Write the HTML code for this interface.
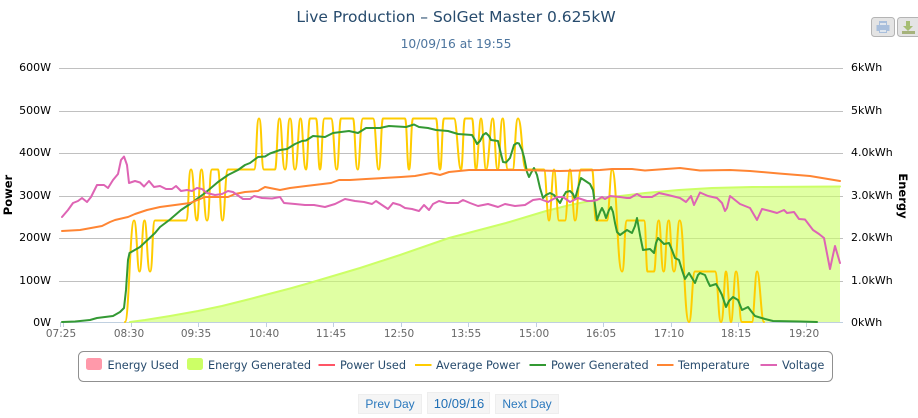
<!DOCTYPE html>
<html>
<head>
<meta charset="utf-8">
<style>
html,body{margin:0;padding:0;background:#fff;width:918px;height:418px;overflow:hidden}
svg{display:block}
text{font-family:"DejaVu Sans",sans-serif}
.l{font-size:11px;fill:#000}
.x{font-size:10.500px;fill:#666;text-anchor:middle}
.g{font-size:11.300px;fill:#274b6d}
.n{font-family:"Liberation Sans",sans-serif;font-size:12px;fill:#2a78bd;text-anchor:middle}
.grid line{stroke:#c0c0c0;stroke-width:1}
.s{fill:none;stroke-width:2;stroke-linejoin:round;stroke-linecap:round}
</style>
</head>
<body>
<svg width="918" height="418" viewBox="0 0 918 418" xmlns="http://www.w3.org/2000/svg">
<text x="456" y="22" text-anchor="middle" font-size="15.500" fill="#274b6d">Live Production – SolGet Master 0.625kW</text>
<text x="456" y="48" text-anchor="middle" font-size="12.300" fill="#4d759e">10/09/16 at 19:55</text>

<!-- export buttons -->
<rect x="871.500" y="17.500" width="23" height="19" rx="3" fill="#e4e4e4" stroke="#b4b4b4"/>
<rect x="897.500" y="17.500" width="23" height="19" rx="3" fill="#e4e4e4" stroke="#b4b4b4"/>
<path d="M879 21h8v4h2.500v6h-2.500v2h-8v-2h-2.500v-6h2.500z" fill="#a9bfdc"/>
<path d="M880 23h6v2h-6zM880 30h6v2h-6z" fill="#dfe6ee"/>
<path d="M906 21h4v5h3l-5 5-5-5h3z" fill="#a6bd72"/>
<rect x="902" y="31" width="13" height="3" fill="#a6b37c"/>

<!-- grid -->
<g class="grid">
<line x1="59" x2="843" y1="68.500" y2="68.500"/>
<line x1="59" x2="843" y1="111.500" y2="111.500"/>
<line x1="59" x2="843" y1="153.500" y2="153.500"/>
<line x1="59" x2="843" y1="196.500" y2="196.500"/>
<line x1="59" x2="843" y1="238.500" y2="238.500"/>
<line x1="59" x2="843" y1="281.500" y2="281.500"/>
</g>
<path d="M60 322.500H843" stroke="#c0d0e0" fill="none"/>
<path d="M60.500 322v5M63.500 322v5M131.500 322v5M198.500 322v5M266.500 322v5M333.500 322v5M401.500 322v5M468.500 322v5M536.500 322v5M603.500 322v5M671.500 322v5M738.500 322v5M806.500 322v5" stroke="#c0d0e0" fill="none"/>

<!-- y labels -->
<g class="l" text-anchor="end">
<text x="51" y="71">600W</text>
<text x="51" y="114">500W</text>
<text x="51" y="156">400W</text>
<text x="51" y="199">300W</text>
<text x="51" y="241">200W</text>
<text x="51" y="284">100W</text>
<text x="51" y="326">0W</text>
</g>
<g class="l">
<text x="851" y="71">6kWh</text>
<text x="851" y="114">5kWh</text>
<text x="851" y="156">4.0kWh</text>
<text x="851" y="199">3.0kWh</text>
<text x="851" y="241">2.0kWh</text>
<text x="851" y="284">1.0kWh</text>
<text x="851" y="326">0kWh</text>
</g>
<text transform="translate(12 195) rotate(-90)" text-anchor="middle" font-size="11.500" font-weight="bold" fill="#000">Power</text>
<text transform="translate(899 196) rotate(90)" text-anchor="middle" font-size="11.500" font-weight="bold" fill="#000">Energy</text>

<!-- x labels -->
<text class="x" x="61" y="337">07:25</text>
<text class="x" x="129" y="337">08:30</text>
<text class="x" x="196" y="337">09:35</text>
<text class="x" x="264" y="337">10:40</text>
<text class="x" x="331" y="337">11:45</text>
<text class="x" x="399" y="337">12:50</text>
<text class="x" x="466" y="337">13:55</text>
<text class="x" x="534" y="337">15:00</text>
<text class="x" x="601" y="337">16:05</text>
<text class="x" x="669" y="337">17:10</text>
<text class="x" x="736" y="337">18:15</text>
<text class="x" x="804" y="337">19:20</text>

<!-- energy generated area -->
<path d="M130 322L145 320L170 316L198 311L222 306L250 299L265 295L290 288.500L306 284L333 276L360 268L400 255L449 238L506 223L546 211L570 205L600 199L612 197L645 193L679 190L712 188L752 187L840 186.500V322Z" fill="#ccff66" fill-opacity=".6"/>
<path class="s" d="M130 322L145 320L170 316L198 311L222 306L250 299L265 295L290 288.500L306 284L333 276L360 268L400 255L449 238L506 223L546 211L570 205L600 199L612 197L645 193L679 190L712 188L752 187L840 186.500" stroke="#ccff66"/>

<!-- average power -->
<path class="s" stroke="#ffcc00" d="M125 322C129 322 130 220.500 134 220.500C137 220.500 137 271.500 139.500 271.500C142 271.500 142 220.500 144.500 220.500C147 220.500 147 271.500 150 271.500C153 271.500 152 220.500 155 220.500L186 220.500C189 220.500 188 169.500 191 169.500C194 169.500 194 220.500 197 220.500C199 220.500 199 169.500 201.500 169.500C204 169.500 204 220.500 207 220.500C210 220.500 209 169.500 212 169.500L218 169.500C220 169.500 220 220.500 222.500 220.500C225 220.500 225 169.500 228 169.500L254 169.500C257 169.500 256 118.500 259 118.500C262 118.500 261 169.500 264 169.500L275 169.500C277 169.500 277 118.500 279.500 118.500C282 118.500 282 169.500 285 169.500C288 169.500 287 118.500 290 118.500C293 118.500 292 169.500 295 169.500C298 169.500 298 118.500 300.500 118.500C303 118.500 303 169.500 306 169.500C308 169.500 308 118.500 310 118.500L316 118.500C318 118.500 318 169.500 320 169.500C322 169.500 322 118.500 324.500 118.500L331 118.500C334 118.500 334 169.500 336.700 169.500C339 169.500 339 118.500 341 118.500L353 118.500C355 118.500 355 169.500 357.700 169.500C360 169.500 360 118.500 363 118.500L373 118.500C376 118.500 376 169.500 378.700 169.500C381 169.500 381 118.500 383 118.500L405 118.500C407 118.500 407 169.500 409 169.500C411 169.500 411 118.500 413 118.500L436 118.500C438 118.500 438 169.500 440 169.500C442 169.500 442 118.500 444 118.500L454 118.500C457 118.500 458 169.500 461 169.500C463 169.500 463 118.500 465 118.500L472 118.500C474 118.500 474 169.500 476 169.500C478 169.500 479 118.500 481 118.500C483 118.500 484 169.500 486 169.500C489 169.500 490 118.500 492.700 118.500C495 118.500 495 169.500 497.700 169.500C500 169.500 500 118.500 502.700 118.500C505 118.500 505 169.500 508 169.500L512.700 169.500C515 169.500 515 118.500 518 118.500C522 118.500 522 169.500 526 169.500L544 169.500C546 169.500 547 220.500 549 220.500C551 220.500 552 169.500 554 169.500C556 169.500 557 220.500 559 220.500L565 220.500C567 220.500 568 169.500 570 169.500C572 169.500 573 220.500 575 220.500C578 220.500 578 169.500 581 169.500L592 169.500C594 169.500 594 220.500 596 220.500L607 220.500C609 220.500 610 169.500 612 169.500C617 169.500 617 271.500 622 271.500C625 271.500 624 220.500 627 220.500L644 220.500C646 220.500 646 271.500 647.500 271.500L654 271.500C656 271.500 656 220.500 658.700 220.500C661 220.500 661 271.500 663.700 271.500C666 271.500 666 220.500 668.700 220.500C671 220.500 671 271.500 674 271.500C677 271.500 677 220.500 679.700 220.500C684 220.500 684 322 689 322C692 322 692 271.500 695 271.500L715 271.500C718 271.500 718 322 721 322C724 322 724 271.500 726 271.500C728 271.500 729 322 731 322C733 322 734 271.500 736 271.500C739 271.500 739 322 742 322L752 322C754 322 755 271.500 757 271.500C760 271.500 761 322 764 322"/>

<!-- power generated -->
<polyline class="s" stroke="#339933" points="62,322 75,321.500 90,320 97,318 113,316 120,312 124,308 126,290 128,260 129.500,253 140,247 155,233 160,227 170,219.500 181,210 190,204 205,193 218,182 228,175 238,170 245,165 250,163 258,157 265,156.500 270,153.500 280,150 287,149 295,144 302,141 306,140.500 313,136 325,137 333,133 349,131 358,133 366,128 380,128 389,126 406,127 414,124.500 419,127 428,128 436,130 448,131 458,134 472,135 475,140 477,144 480,141 483,135 486,133 489,136 491,140 498,141 500,150 503,162 506,162.500 510,158 514,145 517,143 519,143.500 522,150 524,157 527,172 529,177 531,173 534,168 537,175 540,188 543,198 546,195 550,193 554,195 557,199 560,203 563,197 566,192 570,191 573,194 575,199 578,188 581,178 584,180 590,184 593,190 595,205 597,220 600,212 602,208 604,212 606,218 609,210 611,207 613,212 615,223 617,232 620,235 627,230 632,233 635,226 637,218 640,235 643,250 650,249 654,253 656,243 658,238 664,244 669,243 672,250 675,258 679,260 682,270 685,279 689,273 692,278 695,283 698,275 700,273 705,275 708,282 710,286 716,284 719,289 722,295 726,307 729,301 733,297 738,300 742,310 746,308 748,307 751,311 755,316 765,319 773,321 800,321.500 817,322"/>

<!-- temperature -->
<polyline class="s" stroke="#ff8533" points="62,231 80,230 102,226 110,222 115,220 128,217 135,214 147,210 160,207 175,205 190,203 205,197 228,197 235,194 245,192 258,191 265,187 280,190 290,188 306,186 331,183 339,180 350,180 366,179 401,177 415,176 431,173 440,175 449,172 469,170 520,170 560,171 600,170 612,169 632,169 645,170.500 680,168 700,170.500 730,170 750,171 779,173.500 810,176 840,181"/>

<!-- voltage -->
<polyline class="s" stroke="#de64b4" points="62,217 68,210 73,203 78,201 82,198 87,202 91,197 97,185 104,185 108,188 113,180 118,174 121,160 124,156.500 127,165 129,183 135,181 140,182.500 144,186.500 149,181 154,187 160,186 166,189 172,189 176,186 181,191 187,190 192,191 197,188 202,189 207,193 215,195 222,194 228,191 233,192 243,199 250,199 254,196 262,198 272,198.500 280,197 284,203 295,204 305,205 314,205 325,207 335,204 345,199 355,201 364,202 372,204 376,201 382,205 388,209 393,203 400,205 405,208 412,209 419,211 424,205 429,210 433,204 439,201 447,203 458,203 463,200 470,203 478,206 488,204 498,207 505,204 515,206 525,205 533,200 540,199 548,202 557,197 563,197 570,202 578,198 587,201 592,201 597,200 602,197 605,199 610,196 620,197 627,198 630,198 637,194 642,197 652,197 659,193 668,195 680,198 686,202 691,196 694,205 700,192.500 708,196 717,198 722,203 725,211 727,208 730,196 735,200 740,204 750,208 757,220 762,209 770,211 777,213 784,210 787,213 794,212 799,219 805,219.500 813,230 819,234 824,238 830,269 833,255 835,246 840,263"/>

<!-- legend -->
<rect x="78.500" y="351.500" width="754" height="30" rx="5" fill="#fff" stroke="#909090"/>
<rect x="86" y="358" width="16" height="12" rx="2.500" fill="#ff99aa"/>
<text class="g" x="107.500" y="369">Energy Used</text>
<rect x="187" y="358" width="16" height="12" rx="2.500" fill="#ccff66"/>
<text class="g" x="208" y="369">Energy Generated</text>
<path d="M318.500 365h16.500" stroke="#ff5566" stroke-width="2"/>
<text class="g" x="340" y="369">Power Used</text>
<path d="M415 365h16.500" stroke="#ffcc00" stroke-width="2"/>
<text class="g" x="436" y="369">Average Power</text>
<path d="M529.500 365h16.500" stroke="#339933" stroke-width="2"/>
<text class="g" x="551" y="369">Power Generated</text>
<path d="M657 365h16.500" stroke="#ff8533" stroke-width="2"/>
<text class="g" x="678" y="369">Temperature</text>
<path d="M760.500 365h16.500" stroke="#de64b4" stroke-width="2"/>
<text class="g" x="782" y="369">Voltage</text>

<!-- nav -->
<rect x="358.500" y="394.500" width="63" height="19" fill="#f5f5f5" stroke="#eeeeee"/>
<text class="n" x="390" y="408">Prev Day</text>
<rect x="427.500" y="392.500" width="62" height="21" fill="#f5f5f5" stroke="#eeeeee"/>
<text class="n" x="459" y="408" style="font-size:13px;fill:#1f6fb5">10/09/16</text>
<rect x="495.500" y="394.500" width="63" height="19" fill="#f5f5f5" stroke="#eeeeee"/>
<text class="n" x="527" y="408">Next Day</text>
</svg>
</body>
</html>
